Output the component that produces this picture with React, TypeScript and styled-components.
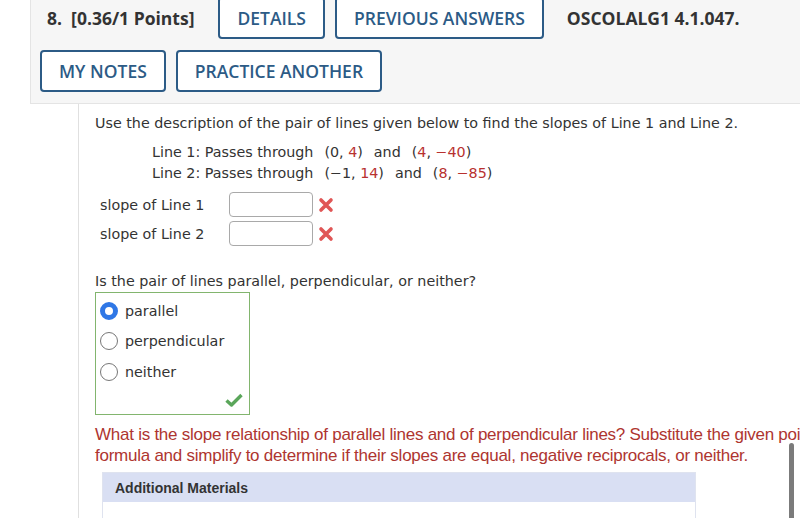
import React from "react";
import styled, { createGlobalStyle } from "styled-components";

const Global = createGlobalStyle`
  html, body { margin: 0; padding: 0; background: #fff; overflow: hidden; }
  body { width: 800px; height: 518px; position: relative; }
`;

const Page = styled.div`
  width: 800px;
  height: 518px;
  overflow: hidden;
  position: relative;
`;

const Header = styled.div`
  margin-left: 30px;
  margin-top: -4px;
  width: 800px;
  background: #f6f6f6;
  border: 1px solid #e4e4e4;
  border-right: none;
  padding: 0 0 11px 9px;
  display: flex;
  flex-direction: column;
  gap: 11px;
  font-family: "Open Sans", sans-serif;
`;

const HeaderRow = styled.div`
  display: flex;
  align-items: center;
  gap: 10px;
`;

const Title = styled.span<{ $pl: number; $pr: number }>`
  font-weight: 700;
  font-size: 17.5px;
  color: #333;
  padding-left: ${(p) => p.$pl}px;
  padding-right: ${(p) => p.$pr}px;
  white-space: nowrap;
`;

const Btn = styled.div`
  height: 42px;
  box-sizing: border-box;
  border: 2px solid #2c5b86;
  border-radius: 4px;
  padding: 0 17px;
  display: flex;
  align-items: center;
  font-size: 17.5px;
  font-weight: 600;
  color: #2c5b86;
  background: #fff;
  white-space: nowrap;
`;

const Content = styled.div`
  margin-left: 78px;
  border-left: 1px solid #e0e0e0;
  padding: 9px 0 0 16px;
  font-family: "DejaVu Sans", Verdana, sans-serif;
  font-size: 14.3px;
  color: #333;
  height: 420px;
`;

const Para = styled.div`
  line-height: 20px;
  white-space: nowrap;
`;

const LinesBlock = styled.div`
  margin: 9px 0 0 57px;
  display: flex;
  flex-direction: column;
  line-height: 21px;
  white-space: nowrap;
`;

const Pt = styled.span`
  margin-left: 11px;
`;

const Red = styled.span`
  color: #b8312f;
`;

const SlopeTable = styled.div`
  margin: 8px 0 0 5px;
  display: grid;
  grid-template-columns: 124px 84px 20px;
  column-gap: 5px;
  row-gap: 4px;
  align-items: center;
`;

const Input = styled.div`
  height: 25px;
  box-sizing: border-box;
  border: 1px solid #a9a9a9;
  border-radius: 4px;
  background: #fff;
`;

const Question = styled.div`
  margin-top: 25px;
  line-height: 20px;
`;

const ChoiceBox = styled.div`
  margin-top: 1px;
  width: 155px;
  height: 123px;
  box-sizing: border-box;
  border: 1px solid #82b56e;
  padding: 8px 0 0 4px;
  position: relative;
  display: flex;
  flex-direction: column;
  gap: 10.4px;
`;

const Choice = styled.div`
  display: flex;
  align-items: center;
  gap: 7px;
  height: 20px;
`;

const Radio = styled.span<{ $on?: boolean }>`
  width: 18px;
  height: 18px;
  box-sizing: border-box;
  border-radius: 50%;
  border: ${(p) => (p.$on ? "5px solid #2f77e6" : "1px solid #777")};
  background: #fff;
  flex: none;
`;

const Check = styled.svg`
  position: absolute;
  right: 6px;
  bottom: 7px;
`;

const Hint = styled.div`
  margin-top: 9px;
  font-family: "Liberation Sans", Arial, sans-serif;
  font-size: 17px;
  letter-spacing: -0.25px;
  line-height: 21px;
  color: #ae3530;
  white-space: nowrap;
`;

const Materials = styled.div`
  margin: 6px 0 0 7px;
  width: 592px;
  border: 1px solid #dfe3ef;
  font-family: "Liberation Sans", Arial, sans-serif;
`;

const MatHead = styled.div`
  background: #d9dff3;
  height: 29px;
  display: flex;
  align-items: center;
  padding-left: 12px;
  font-weight: 700;
  font-size: 14px;
  color: #333;
`;

const MatBody = styled.div`
  height: 40px;
  background: #fff;
`;

const Scrollbar = styled.div`
  position: absolute;
  left: 789px;
  top: 443px;
  width: 5px;
  height: 90px;
  border-radius: 3px;
  background: #7b7b7b;
`;

const XMark = () => (
  <svg width="16" height="16" viewBox="0 0 16 16">
    <path d="M3 3 L13 13 M13 3 L3 13" stroke="#e05656" strokeWidth="3.6" strokeLinecap="round" />
  </svg>
);

export default function App() {
  return (
    <Page>
      <Global />
      <Header>
        <HeaderRow>
          <Title $pl={7} $pr={14}>8.&nbsp; [0.36/1 Points]</Title>
          <Btn>DETAILS</Btn>
          <Btn>PREVIOUS ANSWERS</Btn>
          <Title $pl={13} $pr={0}>OSCOLALG1 4.1.047.</Title>
        </HeaderRow>
        <HeaderRow>
          <Btn>MY NOTES</Btn>
          <Btn>PRACTICE ANOTHER</Btn>
        </HeaderRow>
      </Header>
      <Content>
        <Para>Use the description of the pair of lines given below to find the slopes of Line 1 and Line 2.</Para>
        <LinesBlock>
          <div>
            Line 1: Passes through<Pt>(0, <Red>4</Red>)</Pt><Pt>and</Pt><Pt>(<Red>4</Red>, <Red>−40</Red>)</Pt>
          </div>
          <div>
            Line 2: Passes through<Pt>(−1, <Red>14</Red>)</Pt><Pt>and</Pt><Pt>(<Red>8</Red>, <Red>−85</Red>)</Pt>
          </div>
        </LinesBlock>
        <SlopeTable>
          <span>slope of Line 1</span>
          <Input />
          <XMark />
          <span>slope of Line 2</span>
          <Input />
          <XMark />
        </SlopeTable>
        <Question>Is the pair of lines parallel, perpendicular, or neither?</Question>
        <ChoiceBox>
          <Choice><Radio $on />parallel</Choice>
          <Choice><Radio />perpendicular</Choice>
          <Choice><Radio />neither</Choice>
          <Check width="18" height="14" viewBox="0 0 18 14">
            <path d="M1.5 7.5 L6.5 12 L16.5 2" fill="none" stroke="#5aa65a" strokeWidth="3.4" strokeLinejoin="round" />
          </Check>
        </ChoiceBox>
        <Hint>
          What is the slope relationship of parallel lines and of perpendicular lines? Substitute the given points into the slope
          <br />
          formula and simplify to determine if their slopes are equal, negative reciprocals, or neither.
        </Hint>
        <Materials>
          <MatHead>Additional Materials</MatHead>
          <MatBody />
        </Materials>
      </Content>
      <Scrollbar />
    </Page>
  );
}
